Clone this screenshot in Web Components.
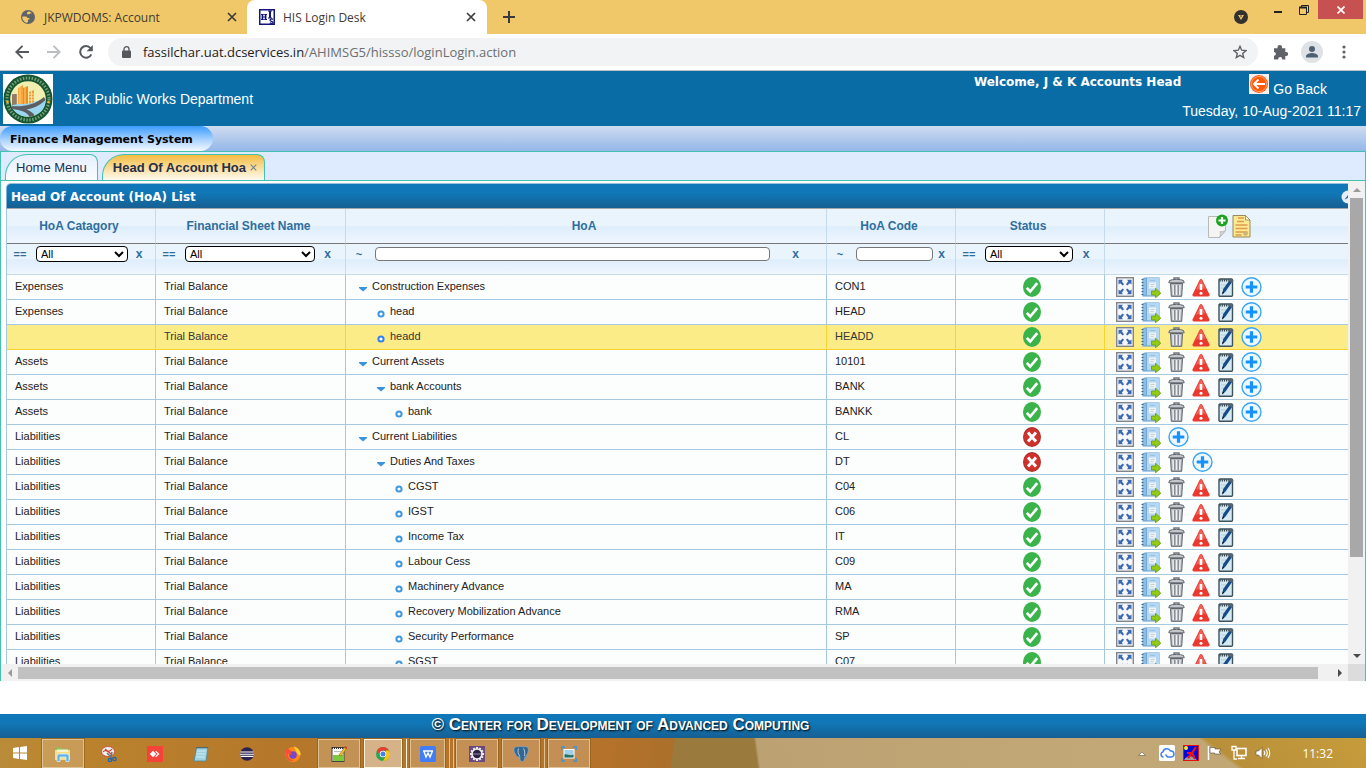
<!DOCTYPE html>
<html lang="en">
<head>
<meta charset="utf-8">
<title>HIS Login Desk</title>
<style>
html, body { margin: 0; height: 100%; }
body { background: #fff; font-family: "Liberation Sans", Arial, sans-serif; overflow: hidden; }
</style>
</head>
<body>
<his-desktop></his-desktop>
<script>
const define = (name, html, init) => {
  const tpl = document.createElement('template');
  tpl.innerHTML = '<style>*{box-sizing:border-box}button{font:inherit;color:inherit;background:none;border:0;padding:0;margin:0;display:grid;place-items:center}</style>' + html;
  customElements.define(name, class extends HTMLElement {
    constructor() {
      super();
      this.attachShadow({ mode: 'open' }).append(tpl.content.cloneNode(true));
    }
    connectedCallback() { if (init) init(this, this.shadowRoot); }
  });
};

/* Icon set: name -> [width, height, markup] */
const gear = (() => {
  let s = '';
  for (let i = 0; i < 12; i++) s += `<rect x="7" y="1" width="2" height="3" fill="#eee" transform="rotate(${i * 30} 8 8)"/>`;
  return s;
})();
const ICONS = {
  globe: [14, 14, '<circle cx="7" cy="7" r="7" fill="#5f6368"/><path d="M1.300 6.500h3.500q1.500.2 1.700 1.500H8q1 .5.300 1.500H7v2.500q-1 .5-1.500 1C3 12 1 9.500 1.300 6.500zM7 1.500c1.500 0 3 .5 4 1.700H9.500q-.5 1.300-2 1H6.200q-1-1.500.8-2.700z" fill="#f1c869"/>'],
  close: [10, 10, '<path d="M1 1l8 8M9 1L1 9" stroke="#3c3c3c" stroke-width="1.700"/>'],
  plus: [12, 12, '<path d="M6 0v12M0 6h12" stroke="#3a3a3a" stroke-width="2"/>'],
  his: [16, 16, '<rect x=".75" y=".75" width="14.500" height="14.500" fill="#fff" stroke="#14147d" stroke-width="1.500"/><path d="M2 5h2.800v1h-.6v1.500h1.600V6h-.6V5H8v1h-.6v4H8v1H5.200v-1h.6V8.500H4.200V10h.6v1H2v-1h.6V6H2zM9 1.500h4v1h-1v6h1v1H9v-1h1v-6H9z" fill="#14147d"/><path d="M14 10.500c-1-1-3-.5-3 .7 0 1.500 3 .8 3 2.200 0 1.200-2.200 1.300-3.200.4" fill="none" stroke="#14147d" stroke-width="1.300"/>'],
  media: [14, 14, '<circle cx="7" cy="7" r="7" fill="#33312f"/><path d="M4 5h6L7 10z" fill="#f1c869"/><path d="M6 5.500h2l-1 2z" fill="#33312f"/>'],
  min: [8, 2, '<path d="M0 1h8" stroke="#222" stroke-width="2"/>'],
  restore: [10, 10, '<path d="M.5 2.500h7v7h-7zM2.500 2V.5h7v7H8" fill="none" stroke="#222"/><path d="M0 2.500h8" stroke="#222" stroke-width="2"/>'],
  winclose: [8, 8, '<path d="M.5 .5l7 7M7.500 .5l-7 7" stroke="#fff" stroke-width="1.700"/>'],
  back: [14, 14, '<path d="M14 7H1.500M7.500 .8L1.300 7l6.200 6.200" fill="none" stroke="#55585c" stroke-width="1.900"/>'],
  fwd: [14, 14, '<path d="M0 7h12.500M6.500 .8L12.700 7l-6.200 6.200" fill="none" stroke="#bbbdbf" stroke-width="1.900"/>'],
  reload: [14, 14, '<path d="M12.300 9.300A5.800 5.800 0 1 1 11.500 3.200" fill="none" stroke="#55585c" stroke-width="2"/><path d="M13.800 0v6.200H7.600z" fill="#55585c"/>'],
  lock: [9, 12, '<rect x="0" y="4.500" width="9" height="7.500" rx="1" fill="#55585c"/><path d="M2 5V3.200a2.500 2.500 0 0 1 5 0V5" fill="none" stroke="#55585c" stroke-width="1.300"/>'],
  star: [14, 14, '<path d="M7 1.300l1.700 3.900 4.300.4-3.300 2.800 1 4.100L7 10.300l-3.700 2.200 1-4.100L1 5.600l4.300-.4z" fill="none" stroke="#5f6368" stroke-width="1.400"/>'],
  puzzle: [15, 15, '<path d="M1 3.200h3.500V2.300a2.300 2.300 0 0 1 4.600 0v.9h3.200V7h.8a2 2 0 0 1 0 4h-.8v3.500H9.200V14a2 2 0 0 0-4 0v.5H1v-3.700h.3a2 2 0 0 0 0-3.900H1z" fill="#5f6368"/>'],
  avatar: [22, 22, '<circle cx="11" cy="11" r="11" fill="#dee1e6"/><circle cx="11" cy="8" r="3" fill="#4d6073"/><path d="M5 16.500v-1.300c0-2 4-3.200 6-3.200s6 1.200 6 3.200v1.300z" fill="#4d6073"/>'],
  dots: [4, 14, '<g fill="#5f6368"><circle cx="2" cy="2" r="1.600"/><circle cx="2" cy="7" r="1.600"/><circle cx="2" cy="12" r="1.600"/></g>'],
  seal: [50, 50, '<rect width="50" height="50" fill="#fff"/><circle cx="25" cy="25" r="24.500" fill="#15562f"/><circle cx="25" cy="25" r="21" fill="none" stroke="#d9e6c8" stroke-width="3" stroke-dasharray="1.500 1.500" opacity=".5"/><circle cx="25" cy="25" r="17.800" fill="#f0efb0"/><path d="M9 20h5v13H9z" fill="#a58d78"/><path d="M10 21v11M12 20v12" stroke="#77604f" stroke-width=".8"/><path d="M15 14l5-3v22h-5z" fill="#f6a63c"/><path d="M20 14l5-2v21h-5z" fill="#f18a1c"/><path d="M17 13v20M22 13v20" stroke="#ffd27e" stroke-width="1"/><path d="M26 18l5-2v15h-5z" fill="#f39a35"/><path d="M26 20h5M26 23h5M26 26h5M28.500 17v14" stroke="#fff1c9" stroke-width=".8"/><path d="M8 31.500c8-3 16 0 24-4l10.500-2.500c1 9-6 17.500-17.500 17.500-9 0-15-5-17-11z" fill="#9ad6f0"/><path d="M8.500 32c9 1 22 0 32.500-9l1.500 3c-6 6-12 8-19 9.500 4 1.500 7 3.500 8 6l-5 1.500c-2-5-9-7-17-8z" fill="#5d5e62"/><circle cx="4.500" cy="28" r="1.300" fill="#e9b12f"/><circle cx="45.500" cy="28" r="1.300" fill="#e9b12f"/>'],
  goback: [20, 20, '<rect width="20" height="20" fill="#f4f2f0"/><circle cx="10" cy="10" r="9" fill="#ff5a0a"/><circle cx="10" cy="10" r="7.600" fill="none" stroke="#ffb58c" stroke-width=".8"/><path d="M16 10H5M9.500 5.500L5 10l4.500 4.500" fill="none" stroke="#fff" stroke-width="1.800"/>'],
  tabclose: [7, 7, '<path d="M.7 .7l5.600 5.600M6.300 .7L.7 6.300" stroke="#75808c" stroke-width="1.100"/>'],
  collapse: [14, 14, '<circle cx="7" cy="7" r="6.500" fill="#e1effb"/><path d="M3.500 9.500L7 5l3.500 4.500L7 8z" fill="#2e6e9e"/>'],
  open: [8, 8, '<path d="M0 2h8v1L4 6.500 0 3z" fill="#3a94dc"/>'],
  leaf: [8, 8, '<circle cx="4" cy="4" r="2.600" fill="#fff" stroke="#3f97de" stroke-width="2"/>'],
  leafon: [8, 8, '<circle cx="4" cy="4" r="2.600" fill="#fff" stroke="#2f82f5" stroke-width="2"/>'],
  ok: [18, 20, '<ellipse cx="9" cy="10" rx="9" ry="10" fill="#39b34a"/><path d="M3.800 10.800l3.400 3.700 7-8.300" fill="none" stroke="#fff" stroke-width="2.700"/>'],
  bad: [18, 20, '<ellipse cx="9" cy="10" rx="9" ry="10" fill="#a8322c"/><ellipse cx="9" cy="10" rx="8" ry="8.800" fill="#d1302b"/><path d="M5 5.500l8 9M13 5.500l-8 9" stroke="#fff" stroke-width="3"/>'],
  newdoc: [21, 24, '<path d="M1.500 2.500h17v14l-6 7h-11z" fill="#f4f4f2" stroke="#b9b9b9"/><path d="M18.500 16.500l-6 7c1-2 1-4 .5-6 2 .5 4 0 5.500-1z" fill="#d4d4d4" stroke="#b0b0b0" stroke-width=".7"/><circle cx="15" cy="6.500" r="6" fill="#1ca51c"/><path d="M15 3v7M11.500 6.500h7" stroke="#fff" stroke-width="2.200"/>'],
  report: [19, 24, '<path d="M1 1.500h12.500L18 6v17H1z" fill="#fde98e" stroke="#978a5c"/><path d="M13.500 1.500V6H18z" fill="#fffbe0" stroke="#8d8563" stroke-width=".8"/><path d="M6 4h6M5 7.500h7M3.500 11h12M3.500 14.500h12M3.500 18h12M3.500 21h6" stroke="#e09a54" stroke-width="1.400"/><circle cx="13.500" cy="19.500" r="2.300" fill="#cdb47a"/>'],
  expand: [18, 20, '<rect x=".7" y=".7" width="16.600" height="18.600" fill="#f6f7fa" stroke="#7f858b" stroke-width="1.400"/><g fill="#3c69b0"><path d="M2.500 2.800h4.500L5.800 4.300l2.200 3-1.200 1.200-2.700-2.300-1.600 1.400z"/><path d="M15.500 2.800h-4.500l1.200 1.500-2.200 3 1.200 1.200 2.700-2.300 1.600 1.400z"/><path d="M2.500 17.200h4.500l-1.200-1.500 2.200-3-1.200-1.200-2.700 2.300-1.600-1.400z"/><path d="M15.500 17.200h-4.500l1.200-1.500-2.200-3 1.200-1.200 2.700 2.300 1.600-1.400z"/></g>'],
  book: [20, 21, '<path d="M1.500 1.500L4 .5h14.500v17.500L16 19.500H1.500z" fill="#5f9bd0"/><path d="M1.500 1.500h4v17h-4z" fill="#8dbce4"/><rect x="5.500" y="1" width="12.500" height="17.500" fill="#b4d7f3"/><path d="M5.500 1v17.500" stroke="#6d9fca" stroke-width=".8"/><path d="M.5 2.500h2M.5 5.500h2M.5 8.500h2M.5 11.500h2M.5 14.500h2M.5 17.500h2" stroke="#47698a" stroke-width="1"/><rect x="8" y="5.500" width="7" height="6" fill="#eef2f0"/><path d="M9.500 7.500h4M9.500 9.500h3" stroke="#b9c2c8" stroke-width=".7"/><path d="M9 3.500h5" stroke="#8fbde0" stroke-width=".8"/><path d="M10.500 14h4v-2.800l5.300 5-5.300 4.600v-2.800h-4z" fill="#94cc15" stroke="#679b10" stroke-width=".8"/>'],
  trash: [17, 20, '<path d="M6 2.500V1h5v1.500" fill="none" stroke="#70767c" stroke-width="1.400"/><path d="M1.500 3.500c3-1.500 11-1.500 14 0l.7 2.300H.8z" fill="#c4c8cd" stroke="#5f656c"/><path d="M2.500 6.500h12l-.8 12.800H3.300z" fill="#b5b9c0" stroke="#5f646b"/><path d="M5 8l.4 10M8.500 8v10M12 8l-.4 10" stroke="#f0f1f3" stroke-width="1.300"/><path d="M6.700 8v10M10.300 8v10" stroke="#7c8188" stroke-width=".9"/>'],
  warn: [18, 20, '<path d="M7.500 3.200Q9 .8 10.500 3.200L17.500 17.500Q18 19.500 16 19.500H2Q0 19.500.5 17.500z" fill="#ea3a30"/><path d="M8.200 3.500Q9 2 9.800 3.500l4 8.500c-4-1-8 0-10 1z" fill="#f5827a" opacity=".55"/><path d="M9 7v6" stroke="#fff" stroke-width="2.600"/><circle cx="9" cy="16.200" r="1.500" fill="#fff"/>'],
  note: [17, 20, '<rect x="2" y="2" width="13.500" height="17.300" rx="1" fill="#d5e9f2" stroke="#3d525c" stroke-width="1.400"/><path d="M2.500 3.300h12.500" stroke="#33434b" stroke-width="2.200" stroke-dasharray="1.200 1"/><path d="M4 8h8M4 11h6" stroke="#a9c8d6" stroke-width=".8"/><path d="M5 17.500l1.200-5.500 7.500-10.300 2.600 1.600L8.500 14.500z" fill="#174b86"/><path d="M12 4l3.300 2 1-3-2.400-1.400z" fill="#5a666f"/><path d="M5 17.500l.8-3 1.500 1z" fill="#111"/>'],
  add: [21, 20, '<ellipse cx="10.500" cy="10" rx="9.500" ry="9.300" fill="#eff8ff" stroke="#3aa5f6" stroke-width="1.400"/><path d="M10.500 4.200v11.600M4.700 10h11.600" stroke="#1593fb" stroke-width="3.200"/>'],
  up: [8, 4, '<path d="M0 4l4-4 4 4z" fill="#9a9a9a"/>'],
  down: [8, 4, '<path d="M0 0l4 4 4-4z" fill="#4b4b4b"/>'],
  left: [4, 8, '<path d="M4 0L0 4l4 4z" fill="#9a9a9a"/>'],
  right: [4, 8, '<path d="M0 0l4 4-4 4z" fill="#4b4b4b"/>'],
  windows: [16, 16, '<path d="M1 3l6-1v5.500H1zM8 1.900L15 1v6.500H8zM1 8.500h6V14l-6-1zM8 8.500h7V15l-7-1z" fill="#fff"/>'],
  explorer: [16, 16, '<path d="M1 1.500h5l1.500 1.500H14v4H1z" fill="#8fbf5b"/><path d="M0 4h15v10H0z" fill="#f5dd8a"/><path d="M2 3.500h11V6H2z" fill="#f7f4cd"/><path d="M2 15.500V10q0-2 2-2h8q2 0 2 2v5.500h-3V11H5v4.500z" fill="#5eb3e8" stroke="#e2f3ff" stroke-width=".7"/>'],
  snip: [16, 16, '<ellipse cx="7" cy="5.500" rx="6.500" ry="5" fill="#f3f1ef" stroke="#c8413a" stroke-width=".8"/><path d="M2 6c3-4 5 3 9-3M4 3l6 5" stroke="#c93b31" stroke-width="1.100" fill="none"/><path d="M6 7l6 6M11 6L9 14" stroke="#69747d" stroke-width="1.500"/><circle cx="9" cy="14" r="1.700" fill="none" stroke="#2067ad" stroke-width="1.300"/><circle cx="13.500" cy="13" r="1.700" fill="none" stroke="#2067ad" stroke-width="1.300"/>'],
  anydesk: [16, 16, '<rect width="16" height="16" fill="#f6433a"/><path d="M6 4.800L9.200 8 6 11.200 2.800 8z" fill="#fff"/><path d="M9 4.800L12.500 8 9 11.200 8.200 10.400 10.500 8 8.200 5.600z" fill="#fff"/>'],
  notepad: [16, 16, '<path d="M3.500 1.500H15l-2 13.500H1z" fill="#9ed2e0" stroke="#4e8495" stroke-width=".8"/><path d="M4 5h9M3.500 8h9M3 11h9" stroke="#cdecf3"/><path d="M3.500 1.700H15" stroke="#3d4d52" stroke-width="1.500" stroke-dasharray="1 1"/>'],
  eclipse: [14, 14, '<circle cx="7" cy="7" r="6.800" fill="#2a2151"/><path d="M.4 5h13.200M0 7.200h14M.6 9.400h12.800" stroke="#fff" stroke-width="1.100"/>'],
  firefox: [16, 16, '<circle cx="8" cy="8.500" r="7.500" fill="#ff8a16"/><path d="M9 .3c3 1 7 4 6.500 9C12 9 11 5 9 .3z" fill="#ffd02e"/><circle cx="8" cy="9" r="3.800" fill="#7846c8"/><path d="M.8 6C1 4 2 2.500 3 1.500 3.200 3.500 4.500 4.500 7 5c-2 .5-1.500 2.500 0 3-2 1.500-4 0-4-1C2 11 5 14.500 9 14 4 17 .2 12 .8 6z" fill="#ff4b3a"/>'],
  npp: [16, 16, '<rect x="1" y="1.500" width="12" height="14" fill="#fafafa" stroke="#444"/><path d="M1 2h12" stroke="#333" stroke-width="2" stroke-dasharray="1 1"/><path d="M2 9h10v6H2z" fill="#7cc93b"/><path d="M3 5.500h7" stroke="#bbb"/><path d="M8 9L14 1l2 1-6 8z" fill="#f1c233" stroke="#8a6312" stroke-width=".6"/><path d="M14 0l2 1.500V3l-2.500-1z" fill="#d32e23"/>'],
  chrome: [14, 14, '<circle cx="7" cy="7" r="7" fill="#2fa350"/><path d="M7 0a7 7 0 0 1 6.100 3.500H7L4 8.500.9 3.500A7 7 0 0 1 7 0z" fill="#e53f33"/><path d="M13.100 3.500A7 7 0 0 1 7 14l3-5.500V3.500z" fill="#fbc116"/><circle cx="7" cy="7" r="3.300" fill="#fff"/><circle cx="7" cy="7" r="2.500" fill="#4182ee"/>'],
  wps: [16, 16, '<rect width="16" height="16" rx="1.500" fill="#427df5"/><path d="M3 5h10M4 5.500l2 5.500L8 7l2 4 2.500-6" fill="none" stroke="#fff" stroke-width="1.400"/>'],
  gear: [16, 16, '<rect width="16" height="16" fill="#6a4a7d"/>' + gear + '<circle cx="8" cy="8" r="5" fill="#2a2440" stroke="#eee" stroke-width="1.600"/><path d="M4 8h8" stroke="#8d7aa6" stroke-width="1.200"/>'],
  elephant: [16, 16, '<path d="M1 4C1 1 3 .5 5 1c2-.7 4-.7 5.500 0C13 0 15.500 1 15.300 4c-.2 3-1.300 5.500-3 6.200l2 .6c-.8.900-2 .9-2.800.4-.2 2.500-.3 4.300-2.500 4.300S7 13 7 10.500C5.500 11 4 11.500 3 9 2 7.500 1 5.500 1 4z" fill="#336791" stroke="#7fb0d3" stroke-width=".6"/><path d="M5.500 2.500C4.500 5 5 8 6.800 10M10.500 2.500c1.500 2 1.500 5 .8 7.500" stroke="#cfe1ee" stroke-width=".8" fill="none"/>'],
  photo: [16, 16, '<path d="M.8 4V1H4M12 1h3.200v3M15.200 12v3H12M4 15H.8v-3" fill="none" stroke="#3e95d6" stroke-width="1.500"/><rect x="2.500" y="3" width="11" height="9.500" fill="#fff"/><rect x="3.500" y="4" width="9" height="7.500" fill="#9ed0ea"/><path d="M3.500 8.500c3-1 5 2 9 0v3h-9z" fill="#276f5f"/>'],
  traytop: [8, 5, '<path d="M.5 4.500L4 1l3.500 3.500z" fill="#fff" stroke="#6b5a3c" stroke-width=".6"/>'],
  cloud: [16, 16, '<rect width="16" height="16" rx="1.500" fill="#fff"/><path d="M4.500 12A2.700 2.700 0 0 1 4 6.700 4 4 0 0 1 11.500 6a3 3 0 0 1 .8 6H8.500L6.500 9.500" fill="none" stroke="#4080f0" stroke-width="1.500"/>'],
  runner: [16, 16, '<rect x=".5" y=".5" width="15" height="15" fill="#0008e0" stroke="#e81010"/><circle cx="3" cy="3" r="2" fill="#ffe818"/><path d="M8 11l6 4H1c2-3 4-4 7-4z" fill="#9d9d9d"/><path d="M13 2L9 8l3 6M4 8l5 0-4 5" stroke="#f01414" stroke-width="2.200" fill="none"/>'],
  flag: [16, 16, '<path d="M1.500 1v14" stroke="#fff" stroke-width="1.500"/><path d="M3 2.500h5V4h6l-2 3 2 2H7.500V8H3z" fill="#fff" stroke="#5b4c33" stroke-width=".6"/>'],
  net: [16, 16, '<rect x="6" y="3.500" width="9" height="7" fill="none" stroke="#fff" stroke-width="1.600"/><path d="M7 13.500h7M10.500 11v2M1 1.500h4v3.500H1zM3 5v9h3" stroke="#fff" stroke-width="1.300" fill="none"/>'],
  sound: [16, 16, '<path d="M1 6h2.500L7 2.500v11L3.500 10H1z" fill="#fff" stroke="#5b4c33" stroke-width=".6"/><path d="M9 6q1.500 2 0 4M11 4.500q2.500 3.500 0 7M13 3q3.500 5 0 10" fill="none" stroke="#fff" stroke-width="1.100"/>']
};
define('ui-icon', '<style>:host{display:inline-block;line-height:0}svg{display:block}</style><span id="b"></span>', (el, root) => {
  const [w, h, body] = ICONS[el.getAttribute('name')];
  root.getElementById('b').innerHTML = `<svg width="${w}" height="${h}" viewBox="0 0 ${w} ${h}" aria-hidden="true">${body}</svg>`;
});

define('browser-tabs', `<style>
:host{display:flex;height:34px;background:#f1c869;font:12px "Open Sans","Noto Sans",sans-serif;color:#3f3b35}
.tab{display:flex;align-items:center;width:240px;padding:0 11px 0 14px;gap:8px}
.tab span{flex:1}
.tab button{width:10px}
.tab.first{width:247px;padding-left:21px;padding-right:10px;gap:9px}
.tab.on{background:#fff;border-radius:8px 8px 0 0;padding-left:12px}
.add{width:44px}
.ctl{display:flex;margin-left:auto;align-items:flex-start}
.ctl button{height:20px}
.ctl .media{height:34px;width:14px;margin-right:26px}
.ctl .min{width:8px;height:24px;margin-right:17px}
.ctl .res{width:10px;margin-right:9px;height:19px}
.ctl .x{width:45px;height:19px;background:#c75050;margin-right:3px}
</style>
<div class="tab first"><ui-icon name="globe"></ui-icon><span>JKPWDOMS: Account</span><button aria-label="Close tab"><ui-icon name="close"></ui-icon></button></div>
<div class="tab on"><ui-icon name="his"></ui-icon><span>HIS Login Desk</span><button aria-label="Close tab"><ui-icon name="close"></ui-icon></button></div>
<button class="add" aria-label="New tab"><ui-icon name="plus"></ui-icon></button>
<div class="ctl"><button class="media" aria-label="Tab search"><ui-icon name="media"></ui-icon></button><button class="min" aria-label="Minimize"><ui-icon name="min"></ui-icon></button><button class="res" aria-label="Restore"><ui-icon name="restore"></ui-icon></button><button class="x" aria-label="Close"><ui-icon name="winclose"></ui-icon></button></div>`);

define('browser-toolbar', `<style>
:host{display:flex;align-items:center;height:37px;background:#fff;border-bottom:1px solid #b9c3c9;padding:0 20px 0 15px;font:13px "Open Sans","Noto Sans",sans-serif}
.nav{display:flex;gap:18px;margin-right:15px}
.url{flex:1;display:flex;align-items:center;height:28px;background:#f1f3f4;border-radius:14px;padding:0 11px 0 14px;gap:12px;color:#6b6f73}
.url a{flex:1;color:inherit;text-decoration:none}
.url b{font-weight:400;color:#222}
.r{display:flex;align-items:center;gap:19px;margin-left:15px}
.r button:first-child{margin-right:-6px}
</style>
<div class="nav"><button aria-label="Back"><ui-icon name="back"></ui-icon></button><button aria-label="Forward"><ui-icon name="fwd"></ui-icon></button><button aria-label="Reload"><ui-icon name="reload"></ui-icon></button></div>
<div class="url"><ui-icon name="lock"></ui-icon><a href="#"><b>fassilchar.uat.dcservices.in</b>/AHIMSG5/hissso/loginLogin.action</a><button aria-label="Bookmark"><ui-icon name="star"></ui-icon></button></div>
<div class="r"><button aria-label="Extensions"><ui-icon name="puzzle"></ui-icon></button><button aria-label="Profile"><ui-icon name="avatar"></ui-icon></button><button aria-label="Menu"><ui-icon name="dots"></ui-icon></button></div>`);

define('site-header', `<style>
:host{display:flex;height:55px;background:#096ca5;color:#fff;font-size:14px;padding:3px 5px 0 3px}
.name{margin:0 auto 0 12px;line-height:50px}
.welcome{font:bold 12px/16px "DejaVu Sans",Verdana,sans-serif;margin-right:1px}
.side{display:flex;flex-direction:column;align-items:flex-end;line-height:16px}
.side a{color:inherit;text-decoration:none;display:flex;gap:4px;margin-right:34px;height:27px;align-items:flex-end}
.side ui-icon{align-self:flex-start}
.side a span{line-height:24px}
time{margin-top:2px}
</style>
<ui-icon name="seal"></ui-icon><div class="name">J&amp;K Public Works Department</div>
<div class="welcome">Welcome, J &amp; K Accounts Head</div>
<div class="side"><a href="#"><ui-icon name="goback"></ui-icon><span>Go Back</span></a><time>Tuesday, 10-Aug-2021 11:17</time></div>`);

define('module-bar', `<style>
:host{display:block;height:25px;background:linear-gradient(#cfdcf0,#94b7e9)}
button{height:25px;width:213px;border-radius:13px;background:linear-gradient(#3a9bff,#a9d2ff 55%,#f3f9ff);justify-content:start;padding:2px 0 0 10px;font:bold 11px "DejaVu Sans",Verdana,sans-serif;color:#000}
</style><button>Finance Management System</button>`);

define('work-tabs', `<style>
:host{display:flex;align-items:flex-end;gap:4px;height:30px;background:#deebff;border:1px solid #43c2b0;padding-left:4px;font-size:13px;color:#1b3152}
button{height:26px;border:1px solid #43c2b0;border-bottom:0;border-radius:22px 8px 0 0;padding:0 10px;display:flex;align-items:center;background:linear-gradient(#e6effe,#fafcff)}
.on{background:linear-gradient(#f4bd41,#fffaf0);font-weight:bold;gap:4px;padding-right:7px;color:#272e47}
</style><button>Home Menu</button><button class="on"><span>Head Of Account Hoa</span><ui-icon name="tabclose"></ui-icon></button>`);

/* filter kinds: s = drop-down, t = text; last value is the width of the clear cell */
const COLS = [
  ['HoA Catagory', 149, 's', 22], ['Financial Sheet Name', 190, 's', 25], ['HoA', 0, 't', 51],
  ['HoA Code', 129, 't', 17], ['Status', 149, 's', 26]
];
/* category, depth, branch?, name, code, active, actions */
const FULL = 'expand book trash warn note add', LEAF = 'expand book trash warn note';
const ROWS = [
  ['Expenses', 0, 1, 'Construction Expenses', 'CON1', 1, FULL],
  ['Expenses', 1, 0, 'head', 'HEAD', 1, FULL],
  ['', 1, 0, 'headd', 'HEADD', 1, FULL, 'sel'],
  ['Assets', 0, 1, 'Current Assets', '10101', 1, FULL],
  ['Assets', 1, 1, 'bank Accounts', 'BANK', 1, FULL],
  ['Assets', 2, 0, 'bank', 'BANKK', 1, FULL],
  ['Liabilities', 0, 1, 'Current Liabilities', 'CL', 0, 'expand book add'],
  ['Liabilities', 1, 1, 'Duties And Taxes', 'DT', 0, 'expand book trash add'],
  ...[['CGST', 'C04'], ['IGST', 'C06'], ['Income Tax', 'IT'], ['Labour Cess', 'C09'], ['Machinery Advance', 'MA'],
    ['Recovery Mobilization Advance', 'RMA'], ['Security Performance', 'SP'], ['SGST', 'C07']
  ].map(([n, c]) => ['Liabilities', 2, 0, n, c, 1, LEAF])
];
const LABELS = { expand: 'Expand', book: 'Ledger', trash: 'Delete', warn: 'Deactivate', note: 'Edit', add: 'Add child' };

define('account-grid', `<style>
:host{display:block;font-size:11px;color:#222}
.title{display:flex;align-items:center;justify-content:space-between;height:26px;border-top:1px solid #9ebfd6;border-bottom:1px solid #a7a7a7;border-radius:5px 0 0 0;background:linear-gradient(#1078b8 35%,#165f92);padding:2px 0 0 4px;font:bold 12px "DejaVu Sans",Verdana,sans-serif;color:#fff;border-left:1px solid #7fb0d5}
.title button{margin-right:2px}
table{width:100%;table-layout:fixed;border-collapse:separate;border-spacing:0;border-left:1px solid #a6c9e2}
th,td{padding:0;font-weight:normal;border-right:1px solid #a6c9e2;border-bottom:1px solid #a6c9e2;white-space:nowrap;overflow:hidden}
thead th,thead td{border-right-color:#c5dbec;background:linear-gradient(#eaf4fd 50%,#deeefb 52%,#eff6ff)}
thead th{height:35px;border-bottom:1px solid #777;font-weight:bold;font-size:12px;color:#2e6e9e;padding-right:4px}
thead td{height:31px;border-bottom-color:#c5dbec}
.f{display:flex;align-items:center;height:20px;margin-bottom:10px;padding:0 5px;color:#2e6e9e;font-weight:bold}
.f span{width:16px;text-align:center;margin-right:8px}
.f button{flex:none;font-weight:bold;font-size:12px}
select,input{flex:1;min-width:0;font:11px "Liberation Sans",Arial,sans-serif;background:#fff;color:#000;margin:0;padding:0}
select{height:16px;border:1px solid #000;border-radius:4px}
input{height:14px;border:1px solid #777;border-radius:4px}
tbody td{height:25px;padding:0 0 2px 8px;background:#fcfdfd}
.tree{display:flex;align-items:center;gap:5px;height:13px;padding-left:4px}
.tree button{width:9px;height:14px;align-items:end}
.d1{padding-left:22px}.d2{padding-left:40px}
tbody .st{text-align:center;padding:0 0 0 4px;line-height:0}
tbody .ac{padding-bottom:0}
.act{display:flex;gap:7px;padding-left:3px;height:20px;align-items:center}
.head{display:flex;justify-content:center;gap:4px}
.sel td{background:#fbec88;border-color:#fad42e;color:#363636}
</style>
<div class="title">Head Of Account (HoA) List<button aria-label="Collapse"><ui-icon name="collapse"></ui-icon></button></div>
<table><colgroup></colgroup><thead></thead><tbody></tbody></table>`, (el, root) => {
  root.querySelector('colgroup').innerHTML = COLS.map(c => `<col ${c[1] ? `style="width:${c[1]}px"` : ''}>`).join('') + '<col style="width:252px">';
  root.querySelector('thead').innerHTML = '<tr>' + COLS.map(c => `<th>${c[0]}</th>`).join('') +
    '<th><div class="head"><button aria-label="Add record"><ui-icon name="newdoc"></ui-icon></button><button aria-label="Report"><ui-icon name="report"></ui-icon></button></div></th></tr><tr>' +
    COLS.map(([n, , k, x]) => `<td><div class="f"><span>${k === 's' ? '==' : '~'}</span>${k === 's'
      ? `<select aria-label="${n}"><option>All</option></select>` : `<input type="text" aria-label="${n}">`}<button aria-label="Clear ${n}" style="width:${x}px">x</button></div></td>`).join('') + '<td></td></tr>';
  root.querySelector('tbody').innerHTML = ROWS.map(([cat, d, br, name, code, on, acts, cls = '']) =>
    `<tr class="${cls}"><td>${cat}</td><td>Trial Balance</td><td><div class="tree d${d}"><button aria-label="Toggle"><ui-icon name="${br ? 'open' : cls ? 'leafon' : 'leaf'}"></ui-icon></button>${name}</div></td><td>${code}</td><td class="st"><ui-icon name="${on ? 'ok' : 'bad'}"></ui-icon></td><td class="ac"><div class="act">${
      acts.split(' ').map(a => `<button aria-label="${LABELS[a]}"><ui-icon name="${a}"></ui-icon></button>`).join('')}</div></td></tr>`).join('');
});

define('scroll-pane', `<style>
:host{display:grid;grid-template:minmax(0,1fr) 17px / minmax(0,1fr) 17px;min-height:0;border:1px solid #43c2b0;border-width:0 1px}
.view{overflow:hidden;padding:2px 0 0 5px}
.inner{width:calc(100% + 9px)}
.v,.h{display:flex;background:#f1f1f1}
.v{flex-direction:column;padding:0 2px 0 2px}
.h{padding:3px 0 2px}
.v button{height:17px;width:100%}.h button{width:17px;height:100%}
.v i{flex:1;display:flex}
.v i::before{content:"";width:100%;height:80%;background:#a8a8a8}
.h i{flex:1;display:flex}
.h i::before{content:"";width:99%;background:#c1c1c1}
.c{background:#dcdcdc}
</style><div class="view"><div class="inner"><slot></slot></div></div>
<div class="v"><button aria-label="Scroll up"><ui-icon name="up"></ui-icon></button><i></i><button aria-label="Scroll down"><ui-icon name="down"></ui-icon></button></div>
<div class="h"><button aria-label="Scroll left"><ui-icon name="left"></ui-icon></button><i></i><button aria-label="Scroll right"><ui-icon name="right"></ui-icon></button></div><div class="c"></div>`);

define('site-footer', `<style>
:host{display:block;height:24px;margin-top:33px;padding-right:125px;background:linear-gradient(#1078b8 35%,#165f92);color:#fff;text-align:center;font:bold 17px/22px "Liberation Sans",Arial,sans-serif;font-variant:small-caps;text-shadow:1px 1px 2px #000}
</style>© Center for Development of Advanced Computing`);

define('task-bar', `<style>
:host{display:flex;align-items:stretch;height:30px;background:
linear-gradient(37deg,#b8903a00 88%,#b9903a 88.500%,#c69c3b),
linear-gradient(82deg,#bca27200 55.300%,#bca272 55.500%,#c2a877 80%,#c0a672),
linear-gradient(98deg,#b98c3a 0,#bb842d 4%,#b5782b 20%,#b5722a 44%,#ab702b 49.200%,#9b7a3e 49.300%);color:#fff;font:12px "Open Sans","Noto Sans",sans-serif}
.start{width:40px}
.apps{display:flex}
.app{width:42px;margin:1px 2px 0;position:relative}
.open{border:1px solid #dcc294;background:#ffffff33;outline:1px solid #7b551a80}
.now{background:#ffffff70;border-color:#fff6e0}
.s1{width:38px;margin-right:6px}.s1::after,.s2::after,.s2::before{content:"";position:absolute;top:-1px;bottom:-1px;left:100%;width:5px;border-right:1px solid #dcc294}
.s2{width:35px;margin-right:9px}.s2::before{width:9px}
.now::after{border-color:#fff6e0}
.tray{display:flex;align-items:center;gap:8px;margin-left:auto;padding-right:33px}
.tray time{margin-left:23px}
.tray button:first-child{margin-right:5px}
</style>
<button class="start" aria-label="Start"><ui-icon name="windows"></ui-icon></button><div class="apps"></div>
<div class="tray"></div>`, (el, root) => {
  root.querySelector('.apps').innerHTML = [['explorer', 'open'], ['snip', ''], ['anydesk', ''], ['notepad', ''], ['eclipse', ''], ['firefox', ''], ['npp', 'open'],
    ['chrome', 'open now s1'], ['wps', 'open s2'], ['gear', 'open'], ['elephant', 'open s1'], ['photo', 'open']]
    .map(([n, c]) => `<button class="app ${c}" aria-label="${n}"><ui-icon name="${n}"></ui-icon></button>`).join('');
  root.querySelector('.tray').innerHTML = ['traytop', 'cloud', 'runner', 'flag', 'net', 'sound']
    .map(n => `<button aria-label="${n}"><ui-icon name="${n}"></ui-icon></button>`).join('') + '<time>11:32</time>';
});

define('his-desktop', `<style>
:host{display:flex;flex-direction:column;height:100vh;overflow:hidden}
:host>*{flex:none}
scroll-pane.grow{flex:1 1 0}
</style>
<browser-tabs></browser-tabs><browser-toolbar></browser-toolbar><site-header></site-header><module-bar></module-bar><work-tabs></work-tabs>
<scroll-pane class="grow"><account-grid></account-grid></scroll-pane><site-footer></site-footer><task-bar></task-bar>`);
</script>
</body>
</html>
